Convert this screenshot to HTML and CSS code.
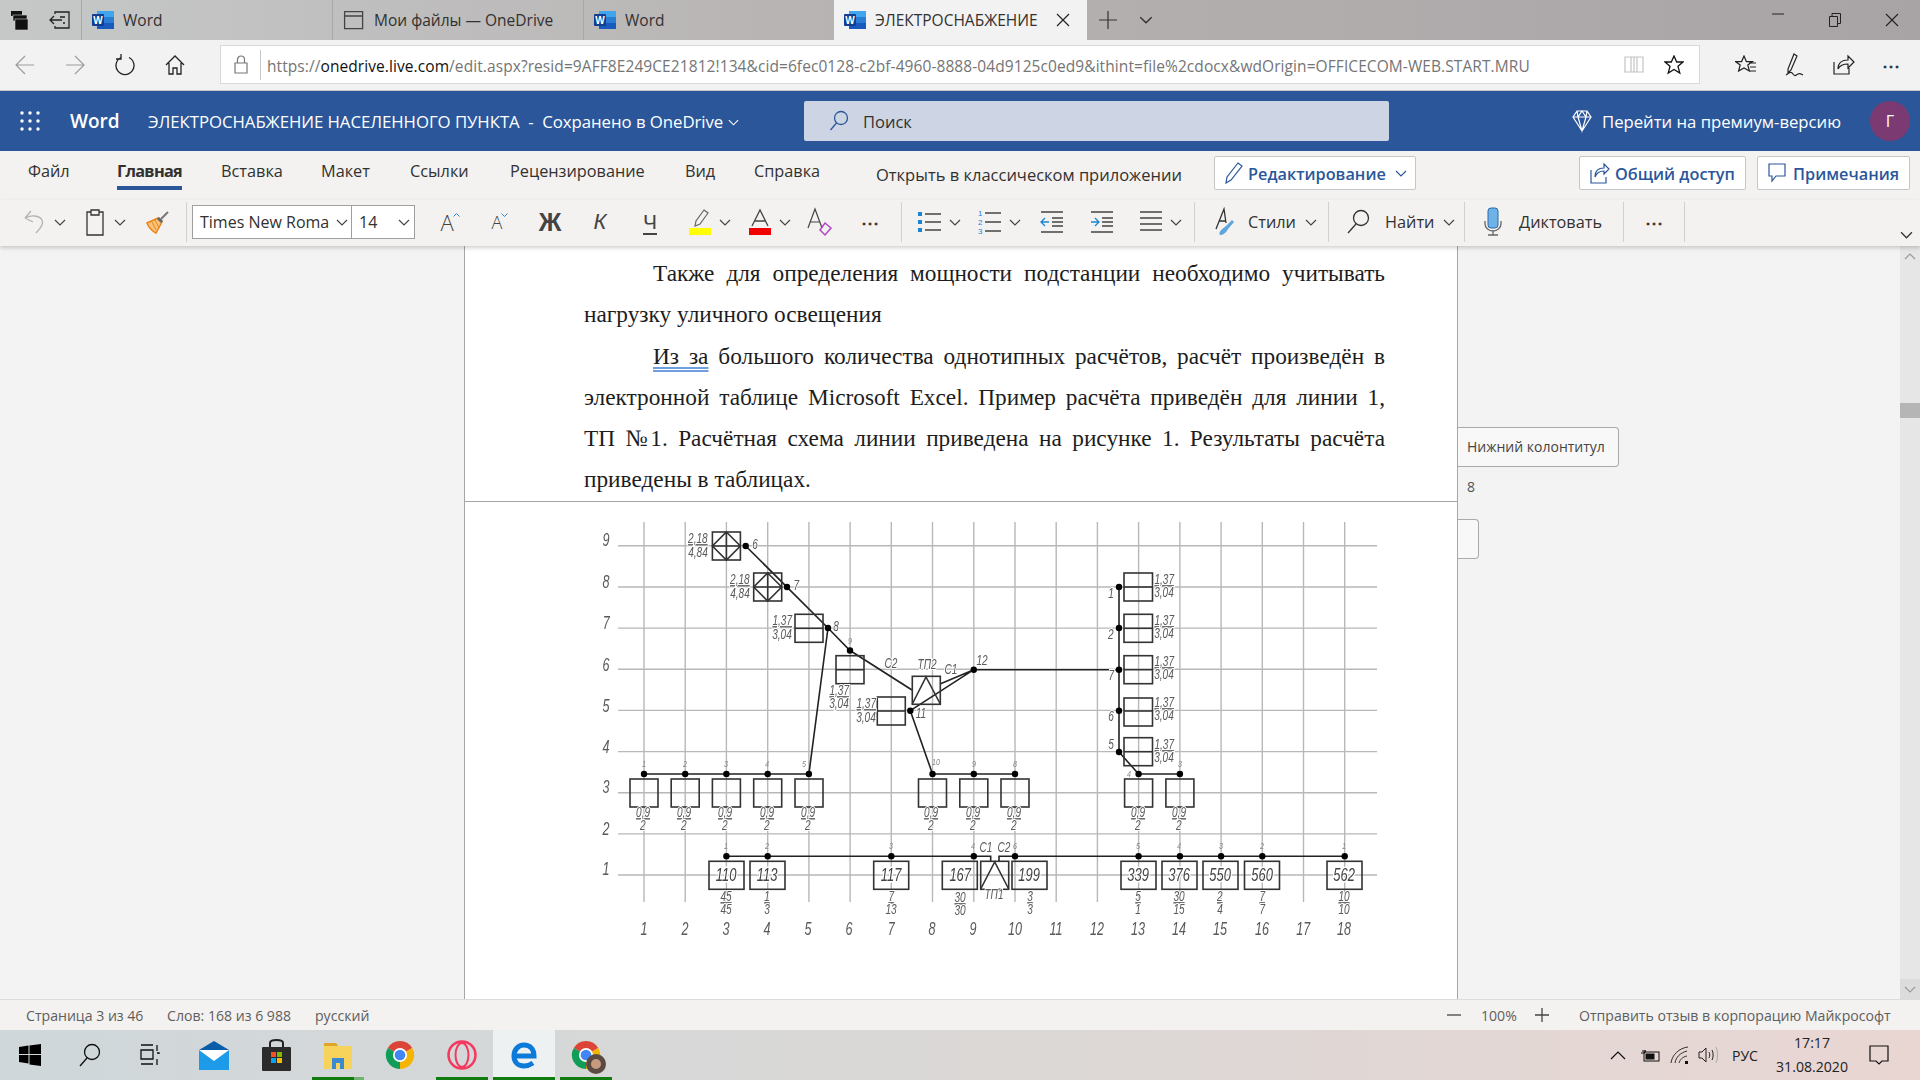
FILE: index.html
```html
<!DOCTYPE html>
<html lang="ru">
<head>
  <meta charset="UTF-8">
  <title>ЭЛЕКТРОСНАБЖЕНИЕ</title>
  <link rel="stylesheet" href="styles.css">
</head>
<body>
  <svg class="defs" width="0" height="0">
    <symbol id="chev" viewBox="0 0 12 7"><path d="M1 1l5 5 5-5" fill="none" stroke="currentColor" stroke-width="1.2"/></symbol>
    <symbol id="word" viewBox="0 0 22 20">
      <rect x="5" y="1" width="17" height="6" fill="#41a5ee"/>
      <rect x="5" y="7" width="17" height="6" fill="#2b7cd3"/>
      <rect x="5" y="13" width="17" height="6" fill="#185abd"/>
      <rect x="0" y="4" width="12" height="12" rx="1" fill="#103f91"/>
    </symbol>
  </svg>

  <div class="app">
    <!-- browser tabs -->
    <div class="tabs">
      <div class="tab-tools">
        <svg width="20" height="22" viewBox="0 0 20 22"><rect x="1" y="2" width="11" height="5" fill="#111"/><rect x="3" y="6" width="14" height="6" fill="#111" stroke="#ccc" stroke-width=".6"/><rect x="5" y="10" width="13" height="11" fill="#111" stroke="#ccc" stroke-width=".6"/></svg>
        <svg width="22" height="20" viewBox="0 0 22 20" fill="none" stroke="#222" stroke-width="1.3"><path d="M6 4V2h14v16H6v-2M1 10h12M5 6l-4 4 4 4M11 7h5M14 13h2"/></svg>
      </div>
      <div class="tab"><svg class="tab-icon" width="22" height="20" viewBox="0 0 22 20"><use href="#word"/><text class="w-mark" x="6" y="13.500">W</text></svg><span>Word</span></div>
      <div class="tab"><svg class="tab-icon" width="22" height="20" viewBox="0 0 22 20" fill="none" stroke="#444" stroke-width="1.3"><path d="M1.600 1.600h18v17h-18zM1.600 6h18"/></svg><span>Мои файлы — OneDrive</span></div>
      <div class="tab"><svg class="tab-icon" width="22" height="20" viewBox="0 0 22 20"><use href="#word"/><text class="w-mark" x="6" y="13.500">W</text></svg><span>Word</span></div>
      <div class="tab tab-active"><svg class="tab-icon" width="22" height="20" viewBox="0 0 22 20"><use href="#word"/><text class="w-mark" x="6" y="13.500">W</text></svg><span>ЭЛЕКТРОСНАБЖЕНИЕ</span>
        <svg class="tab-close" width="14" height="14" viewBox="0 0 14 14" stroke="#222" stroke-width="1.2"><path d="M1 1l12 12M13 1L1 13"/></svg>
      </div>
      <svg class="tab-plus" width="18" height="18" viewBox="0 0 18 18" stroke="#333" stroke-width="1.2"><path d="M9 0v18M0 9h18"/></svg>
      <svg class="tab-more" width="14" height="8"><use href="#chev"/></svg>
      <div class="win-btns">
        <span class="win-btn"><svg width="12" height="2"><path d="M0 1h12" stroke="#222"/></svg></span>
        <span class="win-btn"><svg width="12" height="14" viewBox="0 0 12 14" fill="none" stroke="#222"><path d="M.5 3.500h8v10h-8zM3 3.500V.5h8.500v10H8.500"/></svg></span>
        <span class="win-btn"><svg width="14" height="14" viewBox="0 0 14 14" stroke="#222" stroke-width="1.1"><path d="M1 1l12 12M13 1L1 13"/></svg></span>
      </div>
    </div>

    <!-- address bar -->
    <div class="addr">
      <div class="nav-btns">
        <svg class="nav-dim" width="20" height="20" viewBox="0 0 20 20" fill="none" stroke="#9c9c9c" stroke-width="1.2"><path d="M1 10h18M10 1l-9 9 9 9"/></svg>
        <svg class="nav-dim" width="20" height="20" viewBox="0 0 20 20" fill="none" stroke="#9c9c9c" stroke-width="1.2"><path d="M1 10h18M10 1l9 9-9 9"/></svg>
        <svg width="20" height="22" viewBox="0 0 20 22" fill="none" stroke="#222" stroke-width="1.3"><path d="M6 3.500a9 9 0 1 0 8 0M6 0v5H1"/></svg>
        <svg width="20" height="20" viewBox="0 0 20 20" fill="none" stroke="#222" stroke-width="1.3"><path d="M1 10l9-9 9 9M4 8v11h4v-6h4v6h4V8"/></svg>
      </div>
      <div class="url-box">
        <svg class="lock" width="14" height="19" viewBox="0 0 14 19" fill="none" stroke="#777" stroke-width="1.2"><path d="M1 8h12v10H1zM3.500 8V4.500a3.500 3.500 0 0 1 7 0V8"/></svg>
        <span class="url"><span>https://</span><b>onedrive.live.com</b><span>/edit.aspx?resid=9AFF8E249CE21812!134&amp;cid=6fec0128-c2bf-4960-8888-04d9125c0ed9&amp;ithint=file%2cdocx&amp;wdOrigin=OFFICECOM-WEB.START.MRU</span></span>
        <svg class="reader" width="20" height="18" viewBox="0 0 20 18" fill="none" stroke="#c4c4c4" stroke-width="1.2"><path d="M1 1h18v15H1zM10 1v15M7 1v15M13 1v15"/></svg>
        <svg class="star" width="20" height="20" viewBox="0 0 20 20" fill="none" stroke="#111" stroke-width="1.3"><path d="M10 1l2.700 6h6.300l-5 4.300 1.800 6.700L10 14.400 4.200 18 6 11.300 1 7h6.300z"/></svg>
      </div>
      <div class="addr-tools">
        <svg width="22" height="20" viewBox="0 0 22 20" fill="none" stroke="#222" stroke-width="1.2"><path d="M9 1l2.400 5.600h6L12.800 10l1.600 6L9 13l-5.400 3 1.600-6L.6 6.600h6zM14 8h7M15 12h6M15 16h6"/></svg>
        <svg width="22" height="24" viewBox="0 0 22 24" fill="none" stroke="#222" stroke-width="1.2"><path d="M10 1l3 2-6 14-3 3 0-4zM2 22c3-2 5-4 7-1s3 1 5 0 3 0 5 1"/></svg>
        <svg width="22" height="22" viewBox="0 0 22 22" fill="none" stroke="#222" stroke-width="1.2"><path d="M1 8v12h15v-6M5 15c0-6 4-9 10-9V2l6 6-6 6V10c-5 0-8 1-10 5z"/></svg>
        <span class="dots">&#8943;</span>
      </div>
    </div>

    <!-- word header -->
    <div class="wordbar">
      <div class="wb-left">
        <svg class="waffle" width="20" height="20" viewBox="0 0 20 20" fill="#fff"><circle cx="2" cy="2" r="1.700"/><circle cx="10" cy="2" r="1.700"/><circle cx="18" cy="2" r="1.700"/><circle cx="2" cy="10" r="1.700"/><circle cx="10" cy="10" r="1.700"/><circle cx="18" cy="10" r="1.700"/><circle cx="2" cy="18" r="1.700"/><circle cx="10" cy="18" r="1.700"/><circle cx="18" cy="18" r="1.700"/></svg>
        <span class="wb-app">Word</span>
        <span class="wb-title">ЭЛЕКТРОСНАБЖЕНИЕ НАСЕЛЕННОГО ПУНКТА&nbsp; -&nbsp; Сохранено в OneDrive</span>
        <svg class="wb-chev" width="11" height="7"><use href="#chev"/></svg>
      </div>
      <div class="search">
        <svg width="20" height="22" viewBox="0 0 20 22" fill="none" stroke="#2b579a" stroke-width="1.300"><circle cx="12" cy="8" r="6.500"/><path d="M7.500 13L1.500 20"/></svg>
        <span>Поиск</span>
      </div>
      <div class="wb-right">
        <svg width="20" height="24" viewBox="0 0 20 24" fill="none" stroke="#fff" stroke-width="1.200"><path d="M5 2h10l4 6-9 14L1 8zM1 8h18M6 8l4 14 4-14M5 2l1 6 4-6 4 6 1-6"/></svg>
        <span class="premium">Перейти на премиум-версию</span>
        <span class="avatar">Г</span>
      </div>
    </div>

    <!-- ribbon tabs -->
    <div class="ribbon">
      <span></span>
      <span class="rb-tab">Файл</span>
      <span class="rb-tab rb-active">Главная</span>
      <span class="rb-tab">Вставка</span>
      <span class="rb-tab">Макет</span>
      <span class="rb-tab">Ссылки</span>
      <span class="rb-tab">Рецензирование</span>
      <span class="rb-tab">Вид</span>
      <span class="rb-tab">Справка</span>
      <span class="rb-open">Открыть в классическом приложении</span>
      <span class="rb-cell"><span class="rb-btn rb-edit">
        <svg width="18" height="22" viewBox="0 0 18 22" fill="none" stroke="#2b579a" stroke-width="1.200"><path d="M13 1l4 3L6 18l-5 3 1-6z"/></svg>
        <b>Редактирование</b>
        <svg class="rb-chev" width="12" height="7"><use href="#chev"/></svg>
      </span></span>
      <span class="rb-cell"><span class="rb-btn rb-share">
        <svg width="20" height="22" viewBox="0 0 20 22" fill="none" stroke="#2b579a" stroke-width="1.200"><path d="M1 8v13h15v-6M5 15c0-6 3-9 9-9V2l5 5-5 5V9c-4 0-7 1-9 6z"/></svg>
        <b>Общий доступ</b>
      </span></span>
      <span class="rb-cell"><span class="rb-btn rb-notes">
        <svg width="18" height="20" viewBox="0 0 18 20" fill="none" stroke="#2b579a" stroke-width="1.200"><path d="M1 1h16v12H8l-4 5v-5H1z"/></svg>
        <b>Примечания</b>
      </span></span>
    </div>

    <!-- toolbar -->
    <div class="toolbar">
      <div class="tool w60">
        <svg width="24" height="26" viewBox="0 0 24 26" fill="none" stroke="#b4b2b0" stroke-width="1.300"><path d="M2 9l6-7M2 9l8 4M2 9c6-3 14-3 17 2 2 4-1 8-6 13"/></svg>
        <svg class="chev" width="12" height="7"><use href="#chev"/></svg>
      </div>
      <div class="tool w60">
        <svg width="24" height="28" viewBox="0 0 24 28" fill="none" stroke="#333" stroke-width="1.300"><path d="M8 4H4v23h16V4h-4M8 2h8v5H8z"/></svg>
        <svg class="chev" width="12" height="7"><use href="#chev"/></svg>
      </div>
      <div class="tool w46">
        <svg width="24" height="24" viewBox="0 0 24 24"><path d="M13 8L2 13c2 5 5 8 9 10l6-11z" fill="#fbc27a" stroke="#e8841a" stroke-width="1.500"/><path d="M7 12l4 8M10 10l4 8" stroke="#e8841a"/><path d="M13 8l4 4" stroke="#666" stroke-width="3"/><path d="M16 9l7-7" stroke="#777" stroke-width="2"/></svg>
      </div>
      <span class="sep sep-a"></span>
      <div class="fontbox">
        <span class="font-name">Times New Roma</span>
        <svg class="chev" width="12" height="7"><use href="#chev"/></svg>
        <span class="font-size">14</span>
        <svg class="chev" width="12" height="7"><use href="#chev"/></svg>
      </div>
      <div class="tool w50 after-font"><span class="fa">A</span><svg class="fa-mark" width="7" height="4" viewBox="0 0 7 4" fill="none" stroke="#2b88d8"><path d="M.5 3.500l3-3 3 3"/></svg></div>
      <div class="tool w50"><span class="fa fa-sm">A</span><svg class="fa-mark" width="7" height="4" viewBox="0 0 7 4" fill="none" stroke="#2b88d8"><path d="M.5.500l3 3 3-3"/></svg></div>
      <div class="tool w50"><span class="fmt fmt-b">Ж</span></div>
      <div class="tool w50"><span class="fmt fmt-i">К</span></div>
      <div class="tool w50"><span class="fmt fmt-u">Ч</span></div>
      <div class="tool w68">
        <svg width="24" height="28" viewBox="0 0 24 28"><path d="M16 2l4 3-8 11-5 2 1-5z" fill="none" stroke="#666" stroke-width="1.200"/><rect x="1" y="20" width="22" height="7" fill="#ffff00"/></svg>
        <svg class="chev" width="12" height="7"><use href="#chev"/></svg>
      </div>
      <div class="tool w52">
        <svg width="24" height="28" viewBox="0 0 24 28" fill="none"><path d="M4 18L12 2l8 16M7 13h10" stroke="#444" stroke-width="1.300"/><rect x="1" y="20" width="22" height="7" fill="#f00000"/></svg>
        <svg class="chev" width="12" height="7"><use href="#chev"/></svg>
      </div>
      <div class="tool w50">
        <svg width="26" height="30" viewBox="0 0 26 30" fill="none"><path d="M1 21L8 2l7 19M3 15h10" stroke="#444" stroke-width="1.200"/><path d="M18 16l6 5-6 7-5-5z" stroke="#b146c2" stroke-width="1.500"/></svg>
      </div>
      <div class="tool w50"><span class="dots">&#8943;</span></div>
      <span class="sep sep-a"></span>
      <div class="tool w64">
        <svg width="24" height="24" viewBox="0 0 24 24"><g fill="#1a86d0"><rect x="0" y="2" width="4" height="4"/><rect x="0" y="10" width="4" height="4"/><rect x="0" y="18" width="4" height="4"/></g><path d="M7 4h16M7 12h16M7 20h16" stroke="#444" stroke-width="1.500"/></svg>
        <svg class="chev" width="12" height="7"><use href="#chev"/></svg>
      </div>
      <div class="tool w56">
        <svg width="24" height="26" viewBox="0 0 24 26"><path d="M7 4h16M7 13h16M7 22h16" stroke="#444" stroke-width="1.500"/><g fill="#1a86d0" font-family="Liberation Sans" font-size="8"><text x="0" y="7">1</text><text x="0" y="16">2</text><text x="0" y="25">3</text></g></svg>
        <svg class="chev" width="12" height="7"><use href="#chev"/></svg>
      </div>
      <div class="tool w50">
        <svg width="24" height="24" viewBox="0 0 24 24" fill="none"><path d="M1 2h22M12 8h11M12 12h11M12 16h11M1 22h22" stroke="#444" stroke-width="1.400"/><path d="M9 12H1M5 8l-4 4 4 4" stroke="#1a86d0" stroke-width="1.300"/></svg>
      </div>
      <div class="tool w50">
        <svg width="24" height="24" viewBox="0 0 24 24" fill="none"><path d="M1 2h22M12 8h11M12 12h11M12 16h11M1 22h22" stroke="#444" stroke-width="1.400"/><path d="M1 12h8M5 8l4 4-4 4" stroke="#1a86d0" stroke-width="1.300"/></svg>
      </div>
      <div class="tool w66">
        <svg width="24" height="24" viewBox="0 0 24 24"><path d="M1 2h22M1 8h22M1 14h22M1 20h22" stroke="#444" stroke-width="1.400"/></svg>
        <svg class="chev" width="12" height="7"><use href="#chev"/></svg>
      </div>
      <span class="sep sep-b"></span>
      <div class="tool w133">
        <svg width="24" height="30" viewBox="0 0 24 30" fill="none"><path d="M3 22L11 2l2 14M6 14h7" stroke="#333" stroke-width="1.300"/><path d="M7 28c-2-3 2-6 6-9l6-6 2 2-6 7c-2 4-5 6-8 6z" fill="#5ea6dc"/></svg>
        <span class="tool-text">Стили</span>
        <svg class="chev" width="12" height="7"><use href="#chev"/></svg>
      </div>
      <span class="sep"></span>
      <div class="tool w135">
        <svg width="24" height="26" viewBox="0 0 24 26" fill="none" stroke="#333" stroke-width="1.300"><circle cx="15" cy="9" r="7.500"/><path d="M10 15L2 24"/></svg>
        <span class="tool-text tt-find">Найти</span>
        <svg class="chev" width="12" height="7"><use href="#chev"/></svg>
      </div>
      <span class="sep"></span>
      <div class="tool w158">
        <svg width="20" height="30" viewBox="0 0 20 30"><rect x="5" y="1" width="10" height="20" rx="3" fill="#6fb2e8" stroke="#2b6ca8"/><path d="M2 14v3c0 4 4 7 8 7s8-3 8-7v-3M10 24v4M5 28h10" fill="none" stroke="#666" stroke-width="1.300"/></svg>
        <span class="tool-text tt-dict">Диктовать</span>
      </div>
      <span class="sep"></span>
      <div class="tool w60"><span class="dots">&#8943;</span></div>
      <span class="sep"></span>
      <svg class="tb-collapse" width="13" height="8"><use href="#chev"/></svg>
    </div>

    <!-- document -->
    <div class="doc">
      <div class="side-left"></div>
      <div class="page">
        <div class="page-text">
          <p>Также для определения мощности подстанции необходимо учитывать нагрузку уличного освещения</p>
          <p><span class="spell">Из за</span> большого количества однотипных расчётов, расчёт произведён в электронной таблице Microsoft Excel. Пример расчёта приведён для линии 1, ТП <span class="numero">№</span>1. Расчётная схема линии приведена на рисунке 1. Результаты расчёта приведены в таблицах.</p>
        </div>
        <div class="page-break"></div>
        <svg class="scheme" width="992" height="497" viewBox="465 502 992 497">
          <path class="grid" d="M644 522V902M685.200 522V902M726.400 522V902M767.700 522V902M808.900 522V902M850.100 522V902M891.300 522V902M932.500 522V902M973.800 522V902M1015 522V902M1056.200 522V902M1097.400 522V902M1138.600 522V902M1179.900 522V902M1221.100 522V902M1262.300 522V902M1303.500 522V902M1344.700 522V902"/>
          <path class="grid" d="M618 875H1377M618 833.900H1377M618 792.700H1377M618 751.600H1377M618 710.400H1377M618 669.300H1377M618 628.100H1377M618 587H1377M618 545.800H1377"/>

          <g class="axis" transform="translate(0 -1)">
            <text x="606" y="547">9</text><text x="606" y="589">8</text><text x="606" y="630">7</text><text x="606" y="672">6</text><text x="606" y="713">5</text><text x="606" y="754">4</text><text x="606" y="794">3</text><text x="606" y="836">2</text><text x="606" y="876">1</text>
            <text x="644" y="936">1</text><text x="685" y="936">2</text><text x="726" y="936">3</text><text x="767" y="936">4</text><text x="808" y="936">5</text><text x="849" y="936">6</text><text x="891" y="936">7</text><text x="932" y="936">8</text><text x="973" y="936">9</text><text x="1015" y="936">10</text><text x="1056" y="936">11</text><text x="1097" y="936">12</text><text x="1138" y="936">13</text><text x="1179" y="936">14</text><text x="1220" y="936">15</text><text x="1262" y="936">16</text><text x="1303" y="936">17</text><text x="1344" y="936">18</text>
          </g>

          <!-- lines -->
          <path class="wire" d="M745.700 546L828 628L850 650.500L912 690M828 628L808.900 774M910.300 710.700L973.800 669.700L940 684M910.300 710.700L932.500 774M973.800 669.700H1119M1119 587V752L1138.600 774"/>
          <path class="wire" d="M644 774H808.900M932.500 774H1015M1138.600 774H1179.900M726.400 856.300H990.700V861M999 861V856.300H1344.700"/>

          <!-- boxes -->
          <g class="box">
            <rect x="712.400" y="532" width="28" height="28"/><path d="M726.400 532L740.400 546L726.400 560L712.400 546ZM726.400 532V560M712.400 546H740.400"/>
            <rect x="753.700" y="573" width="28" height="28"/><path d="M767.700 573L781.700 587L767.700 601L753.700 587ZM767.700 573V601M753.700 587H781.700"/>
            <rect x="795" y="614.300" width="28" height="28"/><path d="M795 628.300H823"/>
            <rect x="836" y="655.700" width="28" height="28"/><path d="M836 669.700H864"/>
            <rect x="877.300" y="697" width="28" height="28"/><path d="M877.300 711H905.300"/>
            <rect x="912.300" y="676.300" width="28" height="28"/><path d="M912.300 704L926 677L940.300 704"/>

            <rect x="1124" y="573" width="28.500" height="28"/><path d="M1124 587H1152.500"/>
            <rect x="1124" y="614.300" width="28.500" height="28"/><path d="M1124 628.300H1152.500"/>
            <rect x="1124" y="655.700" width="28.500" height="28"/><path d="M1124 669.700H1152.500"/>
            <rect x="1124" y="698" width="28.500" height="28"/><path d="M1124 711H1152.500"/>
            <rect x="1124" y="737.700" width="28.500" height="28"/><path d="M1124 751.700H1152.500"/>

            <rect x="630" y="779" width="28" height="28"/><rect x="671.200" y="779" width="28" height="28"/><rect x="712.400" y="779" width="28" height="28"/><rect x="753.700" y="779" width="28" height="28"/><rect x="795" y="779" width="28" height="28"/>
            <rect x="918.500" y="779" width="28" height="28"/><rect x="959.800" y="779" width="28" height="28"/><rect x="1001" y="779" width="28" height="28"/>
            <rect x="1124.600" y="779" width="28" height="28"/><rect x="1165.900" y="779" width="28" height="28"/>

            <rect x="709" y="861.300" width="35" height="28"/><rect x="750" y="861.300" width="35" height="28"/><rect x="873.700" y="861.300" width="35" height="28"/><rect x="942.300" y="861.300" width="35" height="28"/>
            <rect x="980.700" y="861.300" width="28" height="28"/><path d="M980.700 889L994.700 862L1008.700 889"/>
            <rect x="1012" y="861.300" width="35" height="28"/><rect x="1121" y="861.300" width="35" height="28"/><rect x="1162" y="861.300" width="35" height="28"/><rect x="1203" y="861.300" width="35" height="28"/><rect x="1244.500" y="861.300" width="35" height="28"/><rect x="1327" y="861.300" width="35" height="28"/>
          </g>

          <!-- nodes -->
          <g class="node">
            <circle cx="745.700" cy="546" r="3.200"/><circle cx="787" cy="587" r="3.200"/><circle cx="828" cy="628" r="3.200"/><circle cx="850" cy="650.500" r="3.200"/><circle cx="910.300" cy="710.700" r="3.200"/><circle cx="973.800" cy="669.700" r="3.200"/>
            <circle cx="1119" cy="587" r="3.200"/><circle cx="1119" cy="628" r="3.200"/><circle cx="1119" cy="669.700" r="3.200"/><circle cx="1119" cy="710.700" r="3.200"/><circle cx="1119" cy="752" r="3.200"/>
            <circle cx="644" cy="774" r="3.200"/><circle cx="685.200" cy="774" r="3.200"/><circle cx="726.400" cy="774" r="3.200"/><circle cx="767.700" cy="774" r="3.200"/><circle cx="808.900" cy="774" r="3.200"/><circle cx="932.500" cy="774" r="3.200"/><circle cx="973.800" cy="774" r="3.200"/><circle cx="1015" cy="774" r="3.200"/><circle cx="1138.600" cy="774" r="3.200"/><circle cx="1179.900" cy="774" r="3.200"/>
            <circle cx="726.400" cy="856.300" r="3.200"/><circle cx="767.700" cy="856.300" r="3.200"/><circle cx="891.300" cy="856.300" r="3.200"/><circle cx="973.800" cy="856.300" r="3.200"/><circle cx="1015" cy="856.300" r="3.200"/><circle cx="1138.600" cy="856.300" r="3.200"/><circle cx="1179.900" cy="856.300" r="3.200"/><circle cx="1221.100" cy="856.300" r="3.200"/><circle cx="1262.300" cy="856.300" r="3.200"/><circle cx="1344.700" cy="856.300" r="3.200"/>
          </g>

          <!-- box captions -->
          <g class="num">
            <text x="726" y="881">110</text><text x="767" y="881">113</text><text x="891" y="881">117</text><text x="960" y="881">167</text><text x="1029" y="881">199</text><text x="1138" y="881">339</text><text x="1179" y="881">376</text><text x="1220" y="881">550</text><text x="1262" y="881">560</text><text x="1344" y="881">562</text>
          </g>
          <g class="lbl mid">
            <text class="u" x="698" y="543">2,18</text><text x="698" y="557">4,84</text>
            <text class="u" x="740" y="584">2,18</text><text x="740" y="598">4,84</text>
            <text class="u" x="782" y="625">1,37</text><text x="782" y="639">3,04</text>
            <text class="u" x="839" y="695">1,37</text><text x="839" y="708">3,04</text>
            <text class="u" x="866" y="708">1,37</text><text x="866" y="722">3,04</text>
            <text class="u" x="1164" y="584">1,37</text><text x="1164" y="597">3,04</text>
            <text class="u" x="1164" y="625">1,37</text><text x="1164" y="638">3,04</text>
            <text class="u" x="1164" y="666">1,37</text><text x="1164" y="679">3,04</text>
            <text class="u" x="1164" y="707">1,37</text><text x="1164" y="720">3,04</text>
            <text class="u" x="1164" y="749">1,37</text><text x="1164" y="762">3,04</text>
            <text class="u" x="643" y="817">0,9</text><text x="643" y="830">2</text>
            <text class="u" x="684" y="817">0,9</text><text x="684" y="830">2</text>
            <text class="u" x="725" y="817">0,9</text><text x="725" y="830">2</text>
            <text class="u" x="767" y="817">0,9</text><text x="767" y="830">2</text>
            <text class="u" x="808" y="817">0,9</text><text x="808" y="830">2</text>
            <text class="u" x="931" y="817">0,9</text><text x="931" y="830">2</text>
            <text class="u" x="973" y="817">0,9</text><text x="973" y="830">2</text>
            <text class="u" x="1014" y="817">0,9</text><text x="1014" y="830">2</text>
            <text class="u" x="1138" y="817">0,9</text><text x="1138" y="830">2</text>
            <text class="u" x="1179" y="817">0,9</text><text x="1179" y="830">2</text>
            <text class="u" x="726" y="901">45</text><text x="726" y="914">45</text>
            <text class="u" x="767" y="901">1</text><text x="767" y="914">3</text>
            <text class="u" x="891" y="901">7</text><text x="891" y="914">13</text>
            <text class="u" x="960" y="902">30</text><text x="960" y="915">30</text>
            <text class="u" x="1030" y="901">3</text><text x="1030" y="914">3</text>
            <text class="u" x="1138" y="901">5</text><text x="1138" y="914">1</text>
            <text class="u" x="1179" y="901">30</text><text x="1179" y="914">15</text>
            <text class="u" x="1220" y="901">2</text><text x="1220" y="914">4</text>
            <text class="u" x="1262" y="901">7</text><text x="1262" y="914">7</text>
            <text class="u" x="1344" y="901">10</text><text x="1344" y="914">10</text>
            <text x="994" y="899">ТП1</text><text x="986" y="852">С1</text><text x="1004" y="852">С2</text>
            <text x="891" y="668">С2</text><text x="927" y="669">ТП2</text><text x="951" y="674">С1</text><text x="982" y="665">12</text><text x="921" y="718">11</text>
            <text x="755" y="549">6</text><text x="796" y="590">7</text><text x="836" y="631">8</text>
            <text x="1111" y="598">1</text><text x="1111" y="639">2</text><text x="1111" y="680">7</text><text x="1111" y="721">6</text><text x="1111" y="749">5</text>
          </g>
          <g class="tiny">
            <text x="644" y="767">1</text><text x="685" y="767">2</text><text x="726" y="767">3</text><text x="767" y="767">4</text><text x="804" y="767">5</text><text x="936" y="765">10</text><text x="974" y="767">9</text><text x="1015" y="767">8</text><text x="1129" y="777">4</text><text x="1180" y="767">3</text>
            <text x="850" y="644">9</text>
            <text x="726" y="849">1</text><text x="767" y="849">2</text><text x="891" y="849">3</text><text x="973" y="849">4</text><text x="1015" y="849">6</text><text x="1138" y="849">5</text><text x="1179" y="849">4</text><text x="1221" y="849">3</text><text x="1262" y="849">2</text><text x="1344" y="849">1</text>
          </g>
        </svg>
      </div>
      <div class="side-right">
        <div class="footer-tag">Нижний колонтитул</div>
        <div class="page-num">8</div>
        <div class="header-tag"></div>
      </div>
      <div class="scrollbar">
        <span class="sb-btn"><svg width="12" height="7" class="sb-up"><use href="#chev"/></svg></span>
        <span class="sb-thumb"></span>
        <span class="sb-btn sb-down"><svg width="12" height="7"><use href="#chev"/></svg></span>
      </div>
    </div>

    <!-- status bar -->
    <div class="status">
      <span class="st-page">Страница 3 из 46</span>
      <span class="st-words">Слов: 168 из 6 988</span>
      <span class="st-lang">русский</span>
      <svg class="st-minus" width="14" height="2"><path d="M0 1h14" stroke="#444" stroke-width="1.300"/></svg>
      <span class="st-zoom">100%</span>
      <svg class="st-plus" width="14" height="14" viewBox="0 0 14 14" stroke="#444" stroke-width="1.300"><path d="M7 0v14M0 7h14"/></svg>
      <span class="st-feedback">Отправить отзыв в корпорацию Майкрософт</span>
    </div>

    <!-- windows taskbar -->
    <div class="taskbar">
      <span class="tb-item tb-sys"><svg width="22" height="22" viewBox="0 0 22 22" fill="#000"><path d="M0 3l9.500-1.400V10H0zM10.500 1.500L22 0v10H10.500zM0 11h9.500v8.500L0 18zM10.500 11H22v11l-11.500-1.600z"/></svg></span>
      <span class="tb-item tb-sys"><svg width="22" height="24" viewBox="0 0 22 24" fill="none" stroke="#111" stroke-width="1.300"><circle cx="13" cy="9" r="7.500"/><path d="M8 15L1 23"/></svg></span>
      <span class="tb-item tb-sys"><svg width="22" height="22" viewBox="0 0 22 22" fill="none" stroke="#111" stroke-width="1.300"><path d="M2 1h12M2 6h12v9H2zM2 20h12M18 1v6M18 9h2v1M18 15v6"/></svg></span>
      <span class="tb-item tb-first"><svg width="30" height="29" viewBox="0 0 30 29"><path d="M15 0L30 9H0z" fill="#0a5da8"/><rect y="9" width="30" height="20" fill="#1e9be8"/><path d="M0 9h30L15 20z" fill="#fff"/></svg></span>
      <span class="tb-item"><svg width="29" height="32" viewBox="0 0 29 32"><path d="M8 8V4c0-4 13-4 13 0v4" fill="none" stroke="#222" stroke-width="2"/><rect y="8" width="29" height="24" rx="1" fill="#2b2b2b"/><rect x="9" y="13" width="5" height="5" fill="#f25022"/><rect x="15" y="13" width="5" height="5" fill="#7fba00"/><rect x="9" y="19" width="5" height="5" fill="#00a4ef"/><rect x="15" y="19" width="5" height="5" fill="#ffb900"/></svg></span>
      <span class="tb-item tb-run"><svg width="28" height="27" viewBox="0 0 28 27"><path d="M0 2a1 1 0 0 1 1-1h11l3 4H0z" fill="#e0a526"/><rect y="4" width="28" height="23" fill="#f7d35c"/><path d="M8 27V16h12v11h-4v-6h-4v6z" fill="#3a8ad2"/></svg></span>
      <span class="tb-item"><svg width="30" height="30" viewBox="0 0 32 32"><path d="M16 16L3 8.500A15 15 0 0 1 29 8.500Z" fill="#db4437"/><path d="M16 16L29 8.500A15 15 0 0 1 16 31Z" fill="#f4b400"/><path d="M16 16L16 31A15 15 0 0 1 3 8.500Z" fill="#0f9d58"/><circle cx="16" cy="16" r="7.500" fill="#fff"/><circle cx="16" cy="16" r="5.700" fill="#4285f4"/></svg></span>
      <span class="tb-item tb-run tb-one"><svg width="30" height="32" viewBox="0 0 30 32" fill="none" stroke="#f4385e"><circle cx="15" cy="16" r="13.500" stroke-width="2.500"/><ellipse cx="15" cy="16" rx="6.500" ry="12" stroke-width="2"/></svg></span>
      <span class="tb-item tb-run tb-on"><svg width="26" height="30" viewBox="0 0 26 30" fill="none" stroke="#0c7ad8" stroke-width="5"><path d="M3 16h20c0-7-4-11-10-11-6 0-10 5-10 11 0 6 4 10 10 10 3 0 6-1 9-3"/></svg></span>
      <span class="tb-item tb-run tb-one">
        <span class="chrome-user">
          <svg width="30" height="30" viewBox="0 0 32 32"><path d="M16 16L3 8.500A15 15 0 0 1 29 8.500Z" fill="#db4437"/><path d="M16 16L29 8.500A15 15 0 0 1 16 31Z" fill="#f4b400"/><path d="M16 16L16 31A15 15 0 0 1 3 8.500Z" fill="#0f9d58"/><circle cx="16" cy="16" r="7.500" fill="#fff"/><circle cx="16" cy="16" r="5.700" fill="#4285f4"/></svg>
          <svg class="chrome-photo" width="20" height="20" viewBox="0 0 20 20"><circle cx="10" cy="10" r="10" fill="#5a4a42"/><circle cx="10" cy="10" r="5" fill="#c79a80"/></svg>
        </span>
      </span>
      <div class="tray">
        <svg width="16" height="9" viewBox="0 0 16 9" fill="none" stroke="#111" stroke-width="1.200"><path d="M1 8l7-7 7 7"/></svg>
        <svg class="tray-batt" width="20" height="14" viewBox="0 0 20 14"><path d="M1 5h4V2M3 2v2M5 2v2" stroke="#111" fill="none"/><rect x="4" y="4" width="15" height="9" fill="none" stroke="#111"/><rect x="5.500" y="5.500" width="9" height="6" fill="#111"/></svg>
        <svg class="tray-wifi" width="20" height="18" viewBox="0 0 20 18" fill="none" stroke="#333"><path d="M1 17C2 9 9 2 18 1M5 17c1-6 5-10 12-12M9 17c1-3 3-6 8-7"/><rect x="15" y="15" width="3" height="3" fill="#111" stroke="none"/></svg>
        <svg class="tray-snd" width="20" height="18" viewBox="0 0 20 18" fill="none" stroke="#222"><path d="M1 6h3l4-4v14l-4-4H1zM11 6c1 2 1 4 0 6M14 4c1.500 3 1.500 7 0 10"/><path d="M18 1c2 5 2 11 0 16" stroke="#aaa"/></svg>
        <span class="tray-lang">РУС</span>
        <span class="clock"><span>17:17</span><span>31.08.2020</span></span>
        <svg class="tray-note" width="20" height="20" viewBox="0 0 20 20" fill="none" stroke="#111" stroke-width="1.200"><path d="M1 1h18v15h-6l-3 3-3-3H1z"/></svg>
      </div>
    </div>
  </div>
</body>
</html>
```

FILE: styles.css
```css
:root {
  --word-blue: #2b579a;
  --ribbon-bg: #f3f2f1;
  --ui-text: #323130;
}

* {
  box-sizing: border-box;
}

body {
  margin: 0;
  font-family: "Open Sans", "Noto Sans", sans-serif;
  color: var(--ui-text);
  background: #f3f3f3;
}

svg {
  display: block;
  flex: none;
}

.defs {
  position: absolute;
}

.app {
  width: 1920px;
  height: 1080px;
  display: flex;
  flex-direction: column;
  overflow: hidden;
}

/* browser tabs */
.tabs {
  height: 40px;
  display: flex;
  align-items: center;
  font-size: 15.500px;
  background: linear-gradient(90deg, #c6c8c8, #b7b2b2 45%, #a8a4a5);
}

.tab-tools {
  width: 81px;
  display: flex;
  align-items: center;
  gap: 19px;
  padding-left: 10px;
}

.tab {
  width: 251px;
  height: 40px;
  display: flex;
  align-items: center;
  gap: 9px;
  padding-left: 10px;
  border-left: 1px solid #a9a9a9;
}

.tab-active {
  width: 253px;
  background: #f2f2f2;
  border: 0;
}

.w-mark {
  font-family: "Liberation Sans", sans-serif;
  font-size: 10px;
  font-weight: 700;
  fill: #fff;
  text-anchor: middle;
}

.tab-close {
  margin-left: 9px;
}

.tab-plus {
  margin-left: 12px;
}

.tab-more {
  margin-left: 22px;
}

.win-btns {
  margin-left: auto;
  display: flex;
}

.win-btn {
  width: 57px;
  display: flex;
  justify-content: center;
}

/* address bar */
.addr {
  height: 51px;
  display: flex;
  align-items: center;
  background: #f2f2f2;
  border-bottom: 1px solid #c8c8c8;
  padding-bottom: 1px;
}

.nav-btns {
  width: 220px;
  display: flex;
  align-items: center;
  gap: 30px;
  padding-left: 15px;
}

.url-box {
  width: 1480px;
  height: 39px;
  display: flex;
  align-items: center;
  background: #fff;
  border: 1px solid #d9d9d9;
}

.lock {
  margin-left: 13px;
  margin-right: 12px;
}

.url {
  border-left: 1px solid #c8c8c8;
  padding-left: 6px;
  height: 30px;
  line-height: 32px;
  font-size: 15.500px;
  color: #757575;
  white-space: nowrap;
  letter-spacing: .08px;
}

.url b {
  font-weight: 400;
  color: #111;
}

.reader {
  margin-left: auto;
}

.star {
  margin: 0 15px 0 20px;
}

.addr-tools {
  flex: 1;
  display: flex;
  align-items: center;
  gap: 27px;
  padding-left: 35px;
}

.dots {
  font-size: 18px;
  font-weight: 700;
  color: #333;
  line-height: 1;
}

/* word header */
.wordbar {
  height: 60px;
  display: flex;
  align-items: center;
  background: var(--word-blue);
  color: #fff;
}

.wb-left {
  width: 804px;
  display: flex;
  align-items: center;
}

.waffle {
  margin-left: 20px;
}

.wb-app {
  margin-left: 30px;
  width: 78px;
  font-size: 19px;
  font-weight: 600;
}

.wb-title {
  font-size: 16.800px;
  white-space: nowrap;
  letter-spacing: -.05px;
}

.wb-chev {
  margin-left: 5px;
  margin-top: 2px;
}

.search {
  width: 585px;
  height: 40px;
  display: flex;
  align-items: center;
  gap: 14px;
  padding-left: 25px;
  background: #cdd5e4;
  color: #323130;
  border-radius: 2px;
  font-size: 16.500px;
}

.wb-right {
  flex: 1;
  display: flex;
  align-items: center;
  padding-left: 183px;
}

.premium {
  margin-left: 10px;
  width: 260px;
  font-size: 16.700px;
  white-space: nowrap;
}

.avatar {
  width: 40px;
  height: 40px;
  margin-left: 8px;
  border-radius: 50%;
  background: #7c3a72;
  display: flex;
  align-items: center;
  justify-content: center;
  font-size: 16px;
}

/* ribbon tabs */
.ribbon {
  height: 49px;
  display: grid;
  grid-template-columns: 28px 89px 104px 100px 89px 100px 175px 69px 122px 338px 365px 178px 153px;
  align-items: start;
  background: var(--ribbon-bg);
  font-size: 16.300px;
  line-height: 22px;
  white-space: nowrap;
}

.rb-tab {
  padding-top: 9px;
}

.rb-open {
  padding-top: 13px;
  font-size: 16.500px;
}

.rb-cell {
  padding-top: 5px;
}

.rb-active {
  font-weight: 700;
  justify-self: start;
  border-bottom: 4px solid var(--word-blue);
  padding-bottom: 4px;
  letter-spacing: -.7px;
}

.rb-btn {
  height: 34px;
  display: inline-flex;
  align-items: center;
  gap: 5px;
  background: #fff;
  border: 1px solid #c8c6c4;
  border-radius: 2px;
  color: var(--word-blue);
  padding-left: 10px;
}

.rb-btn b {
  font-weight: 600;
  font-size: 16.300px;
  padding-top: 2px;
}

.rb-edit {
  width: 202px;
}

.rb-chev {
  margin-left: 4px;
}

.rb-share {
  width: 167px;
}

.rb-notes {
  width: 153px;
  gap: 7px;
}

/* toolbar */
.toolbar {
  height: 46px;
  display: flex;
  align-items: center;
  padding-left: 14px;
  padding-bottom: 2px;
  background: var(--ribbon-bg);
  box-shadow: 0 2px 4px rgba(0, 0, 0, .18);
  position: relative;
  font-size: 16.300px;
}

.tool {
  height: 40px;
  display: flex;
  align-items: center;
  justify-content: center;
  gap: 7px;
  flex: none;
}

.w46 { width: 46px; }
.w50 { width: 50px; }
.w52 { width: 52px; }
.w56 { width: 56px; }
.w60 { width: 60px; }
.w64 { width: 64px; }
.w66 { width: 66px; }
.w68 { width: 68px; }

.w133,
.w135,
.w158 {
  justify-content: flex-start;
  padding-left: 18px;
}

.w133 { width: 133px; }
.w135 { width: 135px; padding-left: 17px; }
.w158 { width: 158px; padding-left: 18px; }

.chev {
  color: #444;
}

.tool-text {
  margin-left: 4px;
  margin-right: 2px;
  white-space: nowrap;
}

.tt-find {
  margin-left: 8px;
}

.tt-dict {
  margin-left: 9px;
}

.sep {
  width: 1px;
  height: 40px;
  background: #d2d0ce;
  flex: none;
}

.sep-a {
  margin: 0 5px 0 6px;
}

.sep-b {
  margin-left: 1px;
}

.fontbox {
  width: 223px;
  height: 34px;
  display: flex;
  align-items: center;
  background: #fff;
  border: 1px solid #a19f9d;
  font-size: 16px;
}

.font-name {
  width: 143px;
  padding-left: 7px;
  overflow: hidden;
  white-space: nowrap;
}

.fontbox .chev {
  margin-right: 3px;
}

.font-size {
  width: 47px;
  padding-left: 7px;
  border-left: 1px solid #a19f9d;
  line-height: 32px;
}

.after-font {
  margin-left: 10px;
}

.fa {
  font-size: 22px;
  font-weight: 300;
  color: #444;
}

.fa-sm {
  font-size: 18px;
}

.fa-mark {
  margin-left: -8px;
  margin-bottom: 14px;
}

.fmt {
  font-family: "Liberation Sans", sans-serif;
  font-size: 22px;
  color: #444;
}

.fmt-b {
  font-weight: 700;
  font-size: 25px;
}

.fmt-i {
  font-style: italic;
}

.fmt-u {
  text-decoration: underline;
  text-underline-offset: 4px;
  font-size: 21px;
}

.tb-collapse {
  margin-left: auto;
  margin-right: 7px;
  margin-top: 26px;
  color: #333;
}

/* document */
.doc {
  height: 753px;
  display: flex;
  background: #f3f3f3;
}

.side-left {
  width: 464px;
}

.page {
  width: 994px;
  background: #fff;
  border-left: 1px solid #a6a6a6;
  border-right: 1px solid #a6a6a6;
}

.page-text {
  padding: 7px 72px 0 119px;
  font-family: "Liberation Serif", serif;
  font-size: 23.300px;
  line-height: 41.300px;
  color: #1d1d1d;
  text-align: justify;
}

.page-text p {
  margin: 0;
  text-indent: 69px;
}

.spell {
  text-decoration: underline double #6f9fdc;
  text-underline-offset: 3px;
}

.numero {
  letter-spacing: -2px;
}

.page-break {
  height: 1px;
  background: #a6a6a6;
}

.scheme {
  filter: blur(.5px);
}

.grid {
  fill: none;
  stroke: #b8b8b8;
  stroke-width: 1.400;
}

.wire {
  fill: none;
  stroke: #222;
  stroke-width: 1.600;
}

.box {
  fill: none;
  stroke: #333;
  stroke-width: 1.600;
}

.node {
  fill: #000;
}

/* drawing font is narrow, squeeze each label about its own centre */
.scheme text {
  font-family: "Liberation Sans", sans-serif;
  font-style: italic;
  fill: #5a5a5a;
  text-anchor: middle;
  transform-box: fill-box;
  transform-origin: center;
}

.axis text {
  font-size: 18px;
  transform: scaleX(.7);
}

.num text {
  font-size: 18px;
  paint-order: stroke;
  stroke: #fff;
  stroke-width: 3px;
  fill: #444;
  transform: scaleX(.72);
}

.lbl text {
  font-size: 14px;
  paint-order: stroke;
  stroke: #fff;
  stroke-width: 2px;
  transform: scaleX(.72);
}

.lbl .u {
  text-decoration: underline;
}

.tiny text {
  font-size: 9px;
  fill: #888;
  transform: scaleX(.8);
}

.side-right {
  flex: 1;
  padding-top: 181px;
  font-size: 14px;
  color: #444;
}

.footer-tag {
  width: 161px;
  height: 40px;
  line-height: 38px;
  padding-left: 9px;
  background: #f8f8f8;
  border: 1px solid #aaa;
  border-left: 0;
  border-radius: 0 4px 4px 0;
  white-space: nowrap;
  font-size: 14px;
}

.page-num {
  height: 52px;
  padding-left: 9px;
  line-height: 39px;
  color: #555;
}

.header-tag {
  width: 21px;
  height: 40px;
  background: #f8f8f8;
  border: 1px solid #aaa;
  border-left: 0;
  border-radius: 0 4px 4px 0;
}

.scrollbar {
  width: 20px;
  display: flex;
  flex-direction: column;
  background: #e6e6e6;
  color: #9a9a9a;
}

.sb-btn {
  height: 20px;
  display: flex;
  align-items: center;
  justify-content: center;
  flex: none;
}

.sb-up {
  transform: rotate(180deg);
}

.sb-thumb {
  height: 15px;
  margin-top: 137px;
  background: #b5b5b5;
}

.sb-down {
  margin-top: auto;
  background: #dcdcdc;
}

/* status bar */
.status {
  height: 31px;
  display: flex;
  align-items: center;
  font-size: 14.100px;
  color: #605e5c;
  background: var(--ribbon-bg);
  border-top: 1px solid #dcdcdc;
  white-space: nowrap;
}

.st-page {
  margin-left: 26px;
  width: 141px;
}

.st-words {
  width: 148px;
}

.st-lang {
  width: 1131px;
}

.st-minus {
  margin-left: 1px;
}

.st-zoom {
  margin-left: 20px;
  width: 54px;
}

.st-plus {
  margin-right: 30px;
}

/* windows taskbar */
.taskbar {
  height: 50px;
  display: flex;
  align-items: stretch;
  background: linear-gradient(90deg, #cfd7da, #dcd8d6 55%, #e9d6d3);
}

.tb-item {
  width: 62px;
  display: flex;
  align-items: center;
  justify-content: center;
  position: relative;
  flex: none;
}

.tb-sys {
  width: 60px;
}

.tb-first {
  margin-left: 3px;
}

.tb-run::after {
  content: "";
  position: absolute;
  left: 5px;
  right: 5px;
  bottom: 0;
  height: 3px;
  background: #107c10;
  border-right: 10px solid #71b371;
}

.tb-one::after {
  border-right: 0;
}

.tb-on {
  background: #eef1f2;
}

.tb-on::after {
  left: 0;
  right: 0;
  border-right: 0;
}

.chrome-user {
  position: relative;
}

.chrome-photo {
  position: absolute;
  right: -5px;
  bottom: -4px;
}

.tray {
  margin-left: auto;
  display: flex;
  align-items: center;
  font-size: 14.100px;
  color: #222;
}

.tray-batt {
  margin-left: 14px;
}

.tray-wifi {
  margin-left: 10px;
}

.tray-snd {
  margin-left: 8px;
}

.tray-lang {
  margin-left: 14px;
}

.clock {
  width: 92px;
  margin-left: 8px;
  display: flex;
  flex-direction: column;
  align-items: center;
  line-height: 24px;
}

.tray-note {
  margin-left: 11px;
  margin-right: 31px;
}
```
